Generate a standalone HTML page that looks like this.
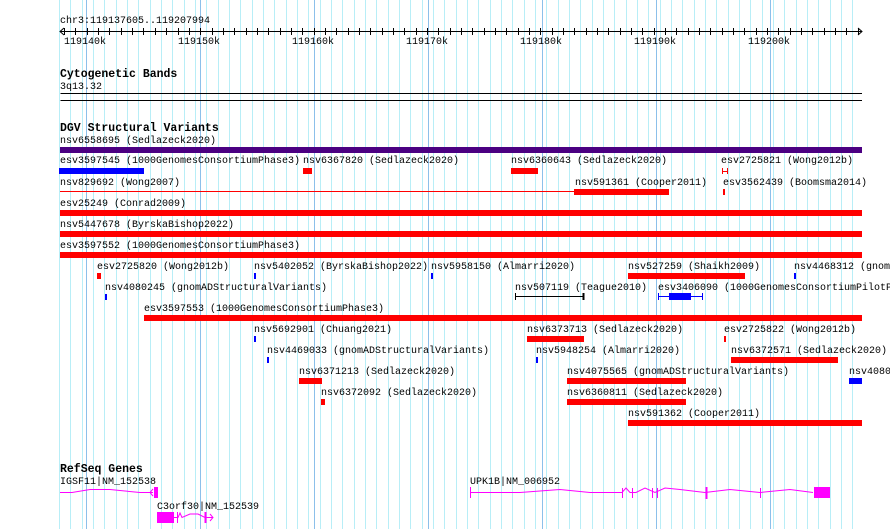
<!DOCTYPE html>
<html><head><meta charset="utf-8"><style>
body{margin:0;width:890px;height:529px;background:#fff;position:relative;overflow:hidden;font-family:"Liberation Mono","DejaVu Sans Mono",monospace;font-size:10px;color:#000}
#w{position:absolute;left:0;top:0;width:890px;height:529px;overflow:hidden}
.t{position:absolute;line-height:12px;white-space:pre;margin-top:2px}
.h{position:absolute;font-weight:bold;font-size:11.5px;line-height:12px;white-space:pre;margin-top:1px}
.b{position:absolute;height:6px}
.r{background:#ff0000}.bl{background:#0000ff}
</style></head><body><div id="w">
<svg width="890" height="529" style="position:absolute;left:0;top:0">
<g stroke="#b8eef7">
<line x1="59.5" y1="0" x2="59.5" y2="529"/><line x1="70.5" y1="0" x2="70.5" y2="529"/><line x1="82.5" y1="0" x2="82.5" y2="529"/><line x1="93.5" y1="0" x2="93.5" y2="529"/><line x1="104.5" y1="0" x2="104.5" y2="529"/><line x1="116.5" y1="0" x2="116.5" y2="529"/><line x1="127.5" y1="0" x2="127.5" y2="529"/><line x1="138.5" y1="0" x2="138.5" y2="529"/><line x1="150.5" y1="0" x2="150.5" y2="529"/><line x1="161.5" y1="0" x2="161.5" y2="529"/><line x1="172.5" y1="0" x2="172.5" y2="529"/><line x1="184.5" y1="0" x2="184.5" y2="529"/><line x1="195.5" y1="0" x2="195.5" y2="529"/><line x1="206.5" y1="0" x2="206.5" y2="529"/><line x1="218.5" y1="0" x2="218.5" y2="529"/><line x1="229.5" y1="0" x2="229.5" y2="529"/><line x1="240.5" y1="0" x2="240.5" y2="529"/><line x1="252.5" y1="0" x2="252.5" y2="529"/><line x1="263.5" y1="0" x2="263.5" y2="529"/><line x1="274.5" y1="0" x2="274.5" y2="529"/><line x1="286.5" y1="0" x2="286.5" y2="529"/><line x1="297.5" y1="0" x2="297.5" y2="529"/><line x1="308.5" y1="0" x2="308.5" y2="529"/><line x1="320.5" y1="0" x2="320.5" y2="529"/><line x1="331.5" y1="0" x2="331.5" y2="529"/><line x1="342.5" y1="0" x2="342.5" y2="529"/><line x1="354.5" y1="0" x2="354.5" y2="529"/><line x1="365.5" y1="0" x2="365.5" y2="529"/><line x1="376.5" y1="0" x2="376.5" y2="529"/><line x1="388.5" y1="0" x2="388.5" y2="529"/><line x1="399.5" y1="0" x2="399.5" y2="529"/><line x1="410.5" y1="0" x2="410.5" y2="529"/><line x1="422.5" y1="0" x2="422.5" y2="529"/><line x1="433.5" y1="0" x2="433.5" y2="529"/><line x1="444.5" y1="0" x2="444.5" y2="529"/><line x1="456.5" y1="0" x2="456.5" y2="529"/><line x1="467.5" y1="0" x2="467.5" y2="529"/><line x1="478.5" y1="0" x2="478.5" y2="529"/><line x1="490.5" y1="0" x2="490.5" y2="529"/><line x1="501.5" y1="0" x2="501.5" y2="529"/><line x1="512.5" y1="0" x2="512.5" y2="529"/><line x1="524.5" y1="0" x2="524.5" y2="529"/><line x1="535.5" y1="0" x2="535.5" y2="529"/><line x1="546.5" y1="0" x2="546.5" y2="529"/><line x1="558.5" y1="0" x2="558.5" y2="529"/><line x1="569.5" y1="0" x2="569.5" y2="529"/><line x1="580.5" y1="0" x2="580.5" y2="529"/><line x1="592.5" y1="0" x2="592.5" y2="529"/><line x1="603.5" y1="0" x2="603.5" y2="529"/><line x1="614.5" y1="0" x2="614.5" y2="529"/><line x1="626.5" y1="0" x2="626.5" y2="529"/><line x1="637.5" y1="0" x2="637.5" y2="529"/><line x1="648.5" y1="0" x2="648.5" y2="529"/><line x1="660.5" y1="0" x2="660.5" y2="529"/><line x1="671.5" y1="0" x2="671.5" y2="529"/><line x1="682.5" y1="0" x2="682.5" y2="529"/><line x1="694.5" y1="0" x2="694.5" y2="529"/><line x1="705.5" y1="0" x2="705.5" y2="529"/><line x1="716.5" y1="0" x2="716.5" y2="529"/><line x1="728.5" y1="0" x2="728.5" y2="529"/><line x1="739.5" y1="0" x2="739.5" y2="529"/><line x1="750.5" y1="0" x2="750.5" y2="529"/><line x1="762.5" y1="0" x2="762.5" y2="529"/><line x1="773.5" y1="0" x2="773.5" y2="529"/><line x1="784.5" y1="0" x2="784.5" y2="529"/><line x1="796.5" y1="0" x2="796.5" y2="529"/><line x1="807.5" y1="0" x2="807.5" y2="529"/><line x1="818.5" y1="0" x2="818.5" y2="529"/><line x1="830.5" y1="0" x2="830.5" y2="529"/><line x1="841.5" y1="0" x2="841.5" y2="529"/><line x1="852.5" y1="0" x2="852.5" y2="529"/>
</g>
<g stroke="#8cc0ea">
<line x1="86.5" y1="0" x2="86.5" y2="529"/><line x1="200.5" y1="0" x2="200.5" y2="529"/><line x1="314.5" y1="0" x2="314.5" y2="529"/><line x1="428.5" y1="0" x2="428.5" y2="529"/><line x1="542.5" y1="0" x2="542.5" y2="529"/><line x1="656.5" y1="0" x2="656.5" y2="529"/><line x1="770.5" y1="0" x2="770.5" y2="529"/>
</g>
<g stroke="#000">
<line x1="60" y1="31.5" x2="862" y2="31.5"/>
<polyline points="64,28 60,31.5 64,35" fill="none"/>
<polyline points="858,28 862,31.5 858,35" fill="none"/>
<line x1="60.5" y1="93.5" x2="862" y2="93.5"/>
<line x1="60.5" y1="100.5" x2="862" y2="100.5"/>
</g>
<g stroke="#000">
<line x1="64.5" y1="28" x2="64.5" y2="35"/><line x1="75.5" y1="28" x2="75.5" y2="35"/><line x1="87.5" y1="28" x2="87.5" y2="35"/><line x1="98.5" y1="28" x2="98.5" y2="35"/><line x1="109.5" y1="28" x2="109.5" y2="35"/><line x1="121.5" y1="28" x2="121.5" y2="35"/><line x1="132.5" y1="28" x2="132.5" y2="35"/><line x1="143.5" y1="28" x2="143.5" y2="35"/><line x1="155.5" y1="28" x2="155.5" y2="35"/><line x1="166.5" y1="28" x2="166.5" y2="35"/><line x1="178.5" y1="28" x2="178.5" y2="35"/><line x1="189.5" y1="28" x2="189.5" y2="35"/><line x1="200.5" y1="28" x2="200.5" y2="35"/><line x1="212.5" y1="28" x2="212.5" y2="35"/><line x1="223.5" y1="28" x2="223.5" y2="35"/><line x1="234.5" y1="28" x2="234.5" y2="35"/><line x1="246.5" y1="28" x2="246.5" y2="35"/><line x1="257.5" y1="28" x2="257.5" y2="35"/><line x1="268.5" y1="28" x2="268.5" y2="35"/><line x1="280.5" y1="28" x2="280.5" y2="35"/><line x1="291.5" y1="28" x2="291.5" y2="35"/><line x1="302.5" y1="28" x2="302.5" y2="35"/><line x1="314.5" y1="28" x2="314.5" y2="35"/><line x1="325.5" y1="28" x2="325.5" y2="35"/><line x1="336.5" y1="28" x2="336.5" y2="35"/><line x1="348.5" y1="28" x2="348.5" y2="35"/><line x1="359.5" y1="28" x2="359.5" y2="35"/><line x1="370.5" y1="28" x2="370.5" y2="35"/><line x1="382.5" y1="28" x2="382.5" y2="35"/><line x1="393.5" y1="28" x2="393.5" y2="35"/><line x1="404.5" y1="28" x2="404.5" y2="35"/><line x1="416.5" y1="28" x2="416.5" y2="35"/><line x1="427.5" y1="28" x2="427.5" y2="35"/><line x1="438.5" y1="28" x2="438.5" y2="35"/><line x1="450.5" y1="28" x2="450.5" y2="35"/><line x1="461.5" y1="28" x2="461.5" y2="35"/><line x1="472.5" y1="28" x2="472.5" y2="35"/><line x1="484.5" y1="28" x2="484.5" y2="35"/><line x1="495.5" y1="28" x2="495.5" y2="35"/><line x1="506.5" y1="28" x2="506.5" y2="35"/><line x1="518.5" y1="28" x2="518.5" y2="35"/><line x1="529.5" y1="28" x2="529.5" y2="35"/><line x1="540.5" y1="28" x2="540.5" y2="35"/><line x1="552.5" y1="28" x2="552.5" y2="35"/><line x1="563.5" y1="28" x2="563.5" y2="35"/><line x1="574.5" y1="28" x2="574.5" y2="35"/><line x1="586.5" y1="28" x2="586.5" y2="35"/><line x1="597.5" y1="28" x2="597.5" y2="35"/><line x1="608.5" y1="28" x2="608.5" y2="35"/><line x1="620.5" y1="28" x2="620.5" y2="35"/><line x1="631.5" y1="28" x2="631.5" y2="35"/><line x1="642.5" y1="28" x2="642.5" y2="35"/><line x1="654.5" y1="28" x2="654.5" y2="35"/><line x1="665.5" y1="28" x2="665.5" y2="35"/><line x1="676.5" y1="28" x2="676.5" y2="35"/><line x1="688.5" y1="28" x2="688.5" y2="35"/><line x1="699.5" y1="28" x2="699.5" y2="35"/><line x1="710.5" y1="28" x2="710.5" y2="35"/><line x1="722.5" y1="28" x2="722.5" y2="35"/><line x1="733.5" y1="28" x2="733.5" y2="35"/><line x1="744.5" y1="28" x2="744.5" y2="35"/><line x1="756.5" y1="28" x2="756.5" y2="35"/><line x1="767.5" y1="28" x2="767.5" y2="35"/><line x1="778.5" y1="28" x2="778.5" y2="35"/><line x1="790.5" y1="28" x2="790.5" y2="35"/><line x1="801.5" y1="28" x2="801.5" y2="35"/><line x1="812.5" y1="28" x2="812.5" y2="35"/><line x1="824.5" y1="28" x2="824.5" y2="35"/><line x1="835.5" y1="28" x2="835.5" y2="35"/><line x1="846.5" y1="28" x2="846.5" y2="35"/><line x1="858.5" y1="28" x2="858.5" y2="35"/>
</g>
<line x1="60" y1="191.5" x2="574" y2="191.5" stroke="#ff0000"/>
<g stroke="#ff0000" stroke-width="1"><line x1="722.5" y1="168" x2="722.5" y2="174"/><line x1="727.5" y1="168" x2="727.5" y2="174"/><line x1="722" y1="171.5" x2="728" y2="171.5"/></g>
<g stroke="#000"><line x1="515" y1="296.5" x2="584" y2="296.5"/><line x1="515.5" y1="293" x2="515.5" y2="300"/><line x1="583.5" y1="293" x2="583.5" y2="300" stroke-width="2"/></g>
<g stroke="#0000ff"><line x1="658" y1="296.5" x2="702" y2="296.5"/><line x1="658.5" y1="293" x2="658.5" y2="300"/><line x1="702.5" y1="293" x2="702.5" y2="300"/></g>
<rect x="669" y="293" width="22" height="7" fill="#0000ff"/>
<g stroke="#ff00ff" fill="none">
<polyline points="60,492.5 72,492.5 90,489.5 110,489.5 125,491 140,492.5 153,492.5"/>
<polyline points="153,489 150,492.5 153,496"/>
<polyline points="470,492.5 520,492.5 560,489.5 590,492.5 622,492.5 626,488 630,492.5 636,492.5 645,488 655,492.5 665,488 680,489.5 705,492.5 730,489.5 760,492.5 790,489.5 813,492.5"/>
<line x1="470.5" y1="487" x2="470.5" y2="498"/>
<line x1="622.5" y1="488" x2="622.5" y2="498"/><line x1="632.5" y1="488" x2="632.5" y2="498"/>
<line x1="652.5" y1="488" x2="652.5" y2="498"/><line x1="657.5" y1="488" x2="657.5" y2="498"/>
<line x1="706.5" y1="487" x2="706.5" y2="499" stroke-width="2"/><line x1="760.5" y1="488" x2="760.5" y2="498"/>
<polyline points="174,517.5 178,517.5 180,513 182,517.5 190,514 198,514 205,517.5 213,517.5"/>
<polyline points="210,514 213,517.5 210,521"/>
<line x1="177.5" y1="512" x2="177.5" y2="523"/><line x1="205.5" y1="512" x2="205.5" y2="523" stroke-width="2"/>
</g>
<rect x="154" y="487" width="4" height="11" fill="#ff00ff"/>
<rect x="814" y="487" width="16" height="11" fill="#ff00ff"/>
<rect x="157" y="512" width="17" height="11" fill="#ff00ff"/>
</svg>

<div class="t" style="left:60px;top:14px">chr3:119137605..119207994</div>
<div class="t" style="left:64px;top:35px">119140k</div>
<div class="t" style="left:178px;top:35px">119150k</div>
<div class="t" style="left:292px;top:35px">119160k</div>
<div class="t" style="left:406px;top:35px">119170k</div>
<div class="t" style="left:520px;top:35px">119180k</div>
<div class="t" style="left:634px;top:35px">119190k</div>
<div class="t" style="left:748px;top:35px">119200k</div>

<div class="h" style="left:60px;top:68px">Cytogenetic Bands</div>
<div class="t" style="left:60px;top:80px">3q13.32</div>

<div class="h" style="left:60px;top:122px">DGV Structural Variants</div>
<div class="t" style="left:60px;top:134px">nsv6558695 (Sedlazeck2020)</div>
<div class="b" style="left:60px;top:147px;width:802px;background:#4b0082"></div>

<div class="t" style="left:60px;top:154px">esv3597545 (1000GenomesConsortiumPhase3)</div>
<div class="t" style="left:303px;top:154px">nsv6367820 (Sedlazeck2020)</div>
<div class="t" style="left:511px;top:154px">nsv6360643 (Sedlazeck2020)</div>
<div class="t" style="left:721px;top:154px">esv2725821 (Wong2012b)</div>
<div class="b bl" style="left:59px;top:168px;width:85px"></div>
<div class="b r" style="left:303px;top:168px;width:9px"></div>
<div class="b r" style="left:511px;top:168px;width:27px"></div>

<div class="t" style="left:60px;top:176px">nsv829692 (Wong2007)</div>
<div class="t" style="left:575px;top:176px">nsv591361 (Cooper2011)</div>
<div class="t" style="left:723px;top:176px">esv3562439 (Boomsma2014)</div>
<div class="b r" style="left:574px;top:189px;width:95px"></div>
<div class="b r" style="left:723px;top:189px;width:2px"></div>

<div class="t" style="left:60px;top:197px">esv25249 (Conrad2009)</div>
<div class="b r" style="left:60px;top:210px;width:802px"></div>
<div class="t" style="left:60px;top:218px">nsv5447678 (ByrskaBishop2022)</div>
<div class="b r" style="left:60px;top:231px;width:802px"></div>
<div class="t" style="left:60px;top:239px">esv3597552 (1000GenomesConsortiumPhase3)</div>
<div class="b r" style="left:60px;top:252px;width:802px"></div>

<div class="t" style="left:97px;top:260px">esv2725820 (Wong2012b)</div>
<div class="t" style="left:254px;top:260px">nsv5402052 (ByrskaBishop2022)</div>
<div class="t" style="left:431px;top:260px">nsv5958150 (Almarri2020)</div>
<div class="t" style="left:628px;top:260px">nsv527259 (Shaikh2009)</div>
<div class="t" style="left:794px;top:260px">nsv4468312 (gnom</div>
<div class="b r" style="left:97px;top:273px;width:4px"></div>
<div class="b bl" style="left:254px;top:273px;width:2px"></div>
<div class="b bl" style="left:431px;top:273px;width:2px"></div>
<div class="b r" style="left:628px;top:273px;width:117px"></div>
<div class="b bl" style="left:794px;top:273px;width:2px"></div>

<div class="t" style="left:105px;top:281px">nsv4080245 (gnomADStructuralVariants)</div>
<div class="t" style="left:515px;top:281px">nsv507119 (Teague2010)</div>
<div class="t" style="left:658px;top:281px">esv3406090 (1000GenomesConsortiumPilotP</div>
<div class="b bl" style="left:105px;top:294px;width:2px"></div>

<div class="t" style="left:144px;top:302px">esv3597553 (1000GenomesConsortiumPhase3)</div>
<div class="b r" style="left:144px;top:315px;width:718px"></div>

<div class="t" style="left:254px;top:323px">nsv5692901 (Chuang2021)</div>
<div class="t" style="left:527px;top:323px">nsv6373713 (Sedlazeck2020)</div>
<div class="t" style="left:724px;top:323px">esv2725822 (Wong2012b)</div>
<div class="b bl" style="left:254px;top:336px;width:2px"></div>
<div class="b r" style="left:527px;top:336px;width:57px"></div>
<div class="b r" style="left:724px;top:336px;width:2px"></div>

<div class="t" style="left:267px;top:344px">nsv4469033 (gnomADStructuralVariants)</div>
<div class="t" style="left:536px;top:344px">nsv5948254 (Almarri2020)</div>
<div class="t" style="left:731px;top:344px">nsv6372571 (Sedlazeck2020)</div>
<div class="b bl" style="left:267px;top:357px;width:2px"></div>
<div class="b bl" style="left:536px;top:357px;width:2px"></div>
<div class="b r" style="left:731px;top:357px;width:107px"></div>

<div class="t" style="left:299px;top:365px">nsv6371213 (Sedlazeck2020)</div>
<div class="t" style="left:567px;top:365px">nsv4075565 (gnomADStructuralVariants)</div>
<div class="t" style="left:849px;top:365px">nsv4080</div>
<div class="b r" style="left:299px;top:378px;width:23px"></div>
<div class="b r" style="left:567px;top:378px;width:119px"></div>
<div class="b bl" style="left:849px;top:378px;width:13px"></div>

<div class="t" style="left:321px;top:386px">nsv6372092 (Sedlazeck2020)</div>
<div class="t" style="left:567px;top:386px">nsv6360811 (Sedlazeck2020)</div>
<div class="b r" style="left:321px;top:399px;width:4px"></div>
<div class="b r" style="left:567px;top:399px;width:119px"></div>

<div class="t" style="left:628px;top:407px">nsv591362 (Cooper2011)</div>
<div class="b r" style="left:628px;top:420px;width:234px"></div>

<div class="h" style="left:60px;top:463px">RefSeq Genes</div>
<div class="t" style="left:60px;top:475px">IGSF11|NM_152538</div>
<div class="t" style="left:157px;top:500px">C3orf30|NM_152539</div>
<div class="t" style="left:470px;top:475px">UPK1B|NM_006952</div>
</div></body></html>
